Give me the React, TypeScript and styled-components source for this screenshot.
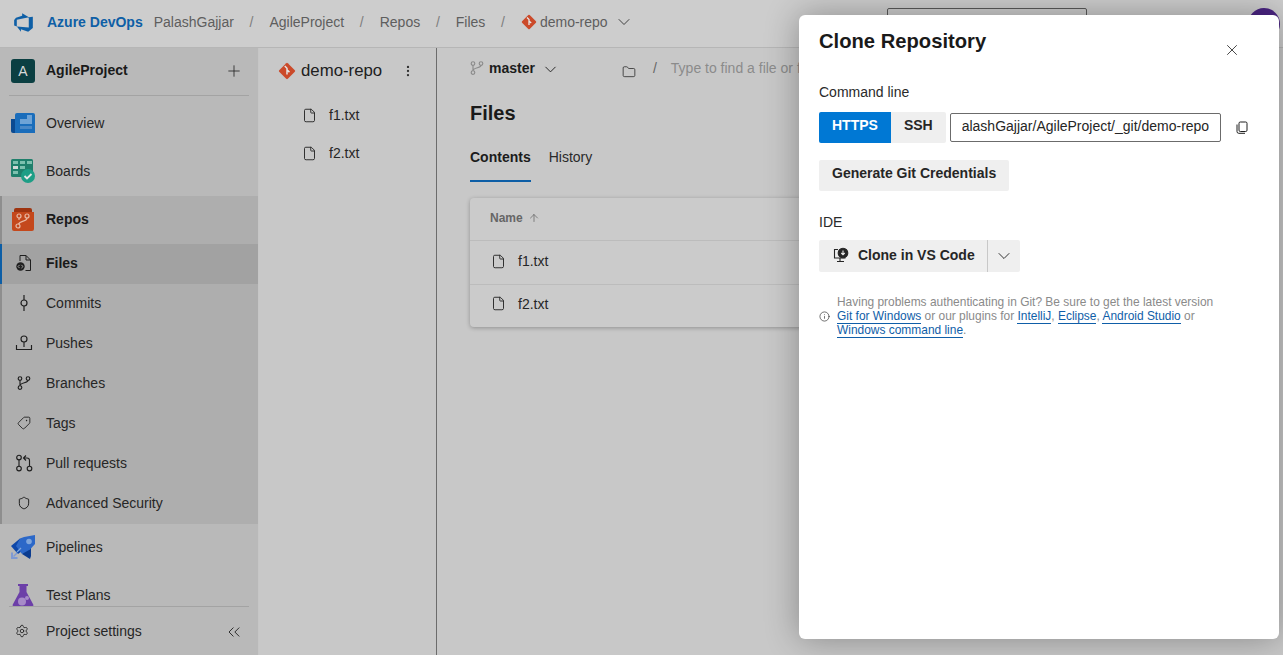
import React from "react";
import styled, { createGlobalStyle } from "styled-components";
import { ChevronDown, Plus, X, ChevronsLeft, Settings, Info, Folder, EllipsisVertical, File, ArrowUp, Tag, Shield } from "lucide-react";

const GlobalStyle = createGlobalStyle`
  html, body {
    margin: 0;
    height: 100%;
    overflow: hidden;
    background: #c8c8c8;
    font-family: "Liberation Sans", Arial, sans-serif;
    font-size: 14px;
    color: #202020;
  }
  #root { height: 100%; }
  * { box-sizing: border-box; }
`;

const Page = styled.div`
  position: relative;
  height: 655px;
  display: flex;
  flex-direction: column;
  overflow: hidden;
`;

const TopBar = styled.header`
  height: 48px;
  flex: none;
  display: flex;
  align-items: center;
  padding: 0 3px 4px 13px;
  background: #cdcdcd;
  border-bottom: 1px solid #b6b6b6;
`;

const Logo = styled.svg`
  width: 21px;
  height: 21px;
  margin: 2px 13px 0 0;
  fill: #0e5fa6;
`;

const Brand = styled.span`
  font-weight: 700;
  color: #0e5fa6;
  margin-right: 11px;
`;

const Crumb = styled.span`
  color: #5e5e5e;
  display: inline-flex;
  align-items: center;
`;

const CrumbName = styled.span`
  margin: 0 6px 0 3px;
`;

const Slash = styled.span`
  color: #7e7e7e;
  margin: 0 16px 0 15.700px;
`;

const SearchBox = styled.div`
  margin: 4px 0 0 auto;
  width: 200px;
  height: 32px;
  border: 1px solid #5a5a5a;
  border-radius: 2px;
`;

const Avatar = styled.div`
  width: 32px;
  height: 32px;
  margin: 4px 0 0 161px;
  border-radius: 50%;
  background: #4a2482;
`;

const Body = styled.div`
  flex: 1;
  display: flex;
  min-height: 0;
`;

const Sidebar = styled.nav`
  width: 259px;
  flex: none;
  display: flex;
  flex-direction: column;
  background: #b9b9b9;
  border-right: 1px solid #c6c6c6;
`;

const ProjectRow = styled.div`
  height: 48px;
  flex: none;
  margin: 0 9px;
  padding: 0 6px 3px 2px;
  display: flex;
  align-items: center;
  gap: 11px;
  border-bottom: 1px solid #a3a3a3;
  font-weight: 700;
  color: #1a1a1a;
`;

const ProjectBadge = styled.span`
  width: 24px;
  height: 24px;
  margin-top: 2px;
  border-radius: 3px;
  background: #0b3f42;
  color: #d8d8d8;
  font-weight: 400;
  display: flex;
  align-items: center;
  justify-content: center;
`;

const PushRight = styled.span`
  margin: 2px 0 0 auto;
  display: flex;
  color: #222;
`;

const NavList = styled.div`
  flex: 1;
  min-height: 0;
  overflow: hidden;
  padding-top: 4px;
`;

const SectionRow = styled.div<{ $bold?: boolean; $inset?: boolean }>`
  height: 48px;
  padding-left: ${(p) => (p.$inset ? 9 : 11)}px;
  padding-bottom: 2px;
  display: flex;
  align-items: center;
  gap: 11px;
  font-weight: ${(p) => (p.$bold ? 700 : 400)};
  color: ${(p) => (p.$bold ? "#1a1a1a" : "#262626")};
`;

const RepoGroup = styled.div`
  background: #aeaeae;
  border-left: 2px solid #8e8e8e;
`;

const SubRow = styled.div<{ $active?: boolean }>`
  height: 40px;
  margin-left: -2px;
  padding-left: 11px;
  padding-bottom: 2px;
  display: flex;
  align-items: center;
  gap: 11px;
  border-left: 2px solid ${(p) => (p.$active ? "#0d5ea6" : "#8e8e8e")};
  background: ${(p) => (p.$active ? "#a2a2a2" : "transparent")};
  font-weight: ${(p) => (p.$active ? 700 : 400)};
  color: ${(p) => (p.$active ? "#1a1a1a" : "#262626")};
`;

const ColorIcon = styled.svg`
  width: 24px;
  height: 24px;
  flex: none;
`;

const SubIcon = styled.span`
  width: 22px;
  height: 24px;
  flex: none;
  display: flex;
  align-items: center;
  justify-content: center;
  color: #1f1f1f;
`;

const SettingsRow = styled.div`
  height: 49px;
  flex: none;
  margin: 0 9px;
  padding: 0 5px 0 6px;
  display: flex;
  align-items: center;
  gap: 17px;
  border-top: 1px solid #a3a3a3;
  color: #262626;
`;

const RepoTree = styled.aside`
  width: 178px;
  flex: none;
  padding: 11px 0 0 19px;
  border-right: 1px solid #6c6c6c;
`;

const RepoHead = styled.div`
  display: flex;
  align-items: center;
  height: 24px;
  font-size: 16.800px;
  color: #202020;
  gap: 5px;
`;

const Kebab = styled.span`
  display: flex;
  margin-left: 14px;
  color: #333;
`;

const TreeList = styled.div`
  margin-top: 13px;
`;

const TreeFile = styled.div`
  height: 38px;
  padding-left: 24px;
  display: flex;
  align-items: center;
  gap: 12px;
  color: #262626;
`;

const Main = styled.main`
  flex: 1;
  padding: 8px 23px 0 33px;
  min-width: 0;
`;

const PathBar = styled.div`
  height: 24px;
  display: flex;
  align-items: center;
  color: #8b8b8b;
`;

const BranchName = styled.span`
  margin-left: 5px;
  font-weight: 700;
  color: #1c1c1c;
`;

const BranchChevron = styled.span`
  display: flex;
  margin: 2px 62px 0 6px;
  color: #222;
`;

const PathSlash = styled.span`
  margin: 0 14px 0 17px;
  color: #666;
`;

const FilesTitle = styled.h1`
  margin: 19px 0 0;
  font-size: 20px;
  line-height: 28px;
  font-weight: 700;
  color: #1a1a1a;
`;

const Tabs = styled.div`
  margin-top: 16px;
  display: flex;
  gap: 18px;
`;

const Tab = styled.div<{ $active?: boolean }>`
  height: 39px;
  padding-top: 6px;
  font-weight: ${(p) => (p.$active ? 700 : 400)};
  color: ${(p) => (p.$active ? "#1c1c1c" : "#2a2a2a")};
  border-bottom: 2px solid ${(p) => (p.$active ? "#0d5ea6" : "transparent")};
`;

const Card = styled.section`
  margin-top: 16px;
  border-radius: 4px;
  background: #cbcbcb;
  box-shadow: 0 1px 4px rgba(0, 0, 0, 0.28);
`;

const CardHead = styled.div`
  height: 43px;
  padding: 0 20px 3px;
  display: flex;
  align-items: center;
  gap: 5px;
  font-size: 12px;
  font-weight: 700;
  color: #666;
  border-bottom: 1px solid #bcbcbc;
`;

const CardRow = styled.div`
  height: 43px;
  padding: 0 20px 3px 21px;
  display: flex;
  align-items: center;
  gap: 12px;
  color: #262626;
  & + & {
    padding-bottom: 5px;
    border-top: 1px solid #bcbcbc;
  }
`;

const Dialog = styled.div`
  position: absolute;
  top: 15px;
  left: 799px;
  width: 480px;
  height: 624px;
  padding: 13px 20px;
  background: #fff;
  border-radius: 6px;
  box-shadow: 0 0 34px rgba(0, 0, 0, 0.32);
`;

const DialogHead = styled.div`
  display: flex;
  justify-content: space-between;
`;

const DialogTitle = styled.h2`
  margin: 0;
  font-size: 20.200px;
  line-height: 26px;
  font-weight: 700;
  color: #1a1a1a;
`;

const CloseBtn = styled.span`
  display: flex;
  margin: 13px 0 0;
  padding-right: 18px;
  color: #222;
`;

const Label = styled.div<{ $gap: number }>`
  margin-top: ${(p) => p.$gap}px;
  font-size: 14px;
  line-height: 18px;
  color: #2a2a2a;
`;

const CommandRow = styled.div`
  margin-top: 11px;
  display: flex;
  align-items: center;
`;

const Segment = styled.button<{ $on?: boolean }>`
  height: 31px;
  border: 0;
  padding: 0 13px 5px;
  font: 700 14px "Liberation Sans", Arial, sans-serif;
  color: ${(p) => (p.$on ? "#fff" : "#262626")};
  background: ${(p) => (p.$on ? "#0078d4" : "#efefef")};
  border-radius: ${(p) => (p.$on ? "2px 0 0 2px" : "0 2px 2px 0")};
`;

const UrlInput = styled.input`
  width: 271px;
  height: 29px;
  margin-left: 4px;
  padding: 0 11px 4px;
  border: 1px solid #6b6b6b;
  border-radius: 2px;
  font: 14px "Liberation Sans", Arial, sans-serif;
  color: #262626;
  outline: none;
`;

const CopyBtn = styled.svg`
  width: 12px;
  height: 13px;
  margin-left: 15px;
  fill: none;
  stroke: #1f1f1f;
  stroke-width: 1;
`;

const PlainButton = styled.button`
  display: block;
  margin-top: 17px;
  height: 31px;
  padding: 0 13px 5px;
  border: 0;
  border-radius: 2px;
  background: #efefef;
  color: #262626;
  font: 700 14px "Liberation Sans", Arial, sans-serif;
`;

const SplitButton = styled.div`
  margin-top: 9px;
  width: 201px;
  height: 32px;
  display: flex;
  align-items: center;
  border-radius: 2px;
  background: #efefef;
  font-weight: 700;
  color: #262626;
`;

const SplitMain = styled.div`
  width: 169px;
  height: 100%;
  padding: 0 0 2px 14px;
  display: flex;
  align-items: center;
  gap: 9px;
  border-right: 1px solid #c8c8c8;
`;

const SplitArrow = styled.div`
  flex: 1;
  display: flex;
  justify-content: center;
  color: #222;
`;

const Note = styled.div`
  margin-top: 23px;
  display: flex;
  align-items: center;
  gap: 7px;
  color: #333;
`;

const NoteText = styled.p`
  margin: 0;
  width: 410px;
  font-size: 11.950px;
  line-height: 14px;
  color: #8a8a8a;
`;

const NoteLink = styled.a`
  color: #0f5ea8;
  text-decoration: none;
  box-shadow: 0 1px 0 #0f5ea8;
`;

const GitDiamond = ({ size }: { size: number }) => (
  <svg width={size} height={size} viewBox="0 0 16 16" style={{ flex: "none" }}>
    <rect x="2.600" y="2.600" width="10.800" height="10.800" rx="1" transform="rotate(45 8 8)" fill="#cb4a2a" />
    <path d="M6 3.500 8 5.500V11M8 7l2.200 2" stroke="#e6e6e6" strokeWidth="1.300" fill="none" />
  </svg>
);

const BranchIcon = () => (
  <svg width="14" height="14" viewBox="0 0 14 14" fill="none" stroke="currentColor" strokeWidth="1.150">
    <circle cx="3" cy="2.500" r="1.800" />
    <circle cx="11" cy="2.500" r="1.800" />
    <circle cx="3" cy="11.500" r="1.800" />
    <path d="M3 4.300v5.400M11 4.300C11 7.500 3.500 6 3 9.700" />
  </svg>
);

const CommitIcon = () => (
  <svg width="16" height="16" viewBox="0 0 16 16" fill="none" stroke="currentColor" strokeWidth="1.200">
    <circle cx="8" cy="8" r="3" />
    <path d="M8 0v5M8 11v5" />
  </svg>
);

const PullRequestIcon = () => (
  <svg width="18" height="18" viewBox="0 0 18 18" fill="none" stroke="currentColor" strokeWidth="1.150">
    <circle cx="4" cy="3.500" r="2.300" />
    <circle cx="4" cy="14.500" r="2.300" />
    <circle cx="14.500" cy="14.500" r="2.300" />
    <path d="M4 5.800v6.400M14.500 12.200V6.500a2.500 2.500 0 0 0-2.500-2.500H8.500M11 1.500 8.500 4 11 6.500" />
  </svg>
);

const FilesIcon = () => (
  <svg width="18" height="18" viewBox="0 0 18 18" fill="none">
    <path d="M5 7V1.500h6l4.500 4.500v10.500h-5M11 1.500V6h4.500" stroke="#1f1f1f" strokeWidth="1" />
    <circle cx="5.500" cy="12.500" r="4.200" fill="#1f1f1f" />
    <path d="M4.600 10.900 3 12.500l1.600 1.600M6.400 10.900 8 12.500l-1.600 1.600" stroke="#b0b0b0" strokeWidth="0.900" fill="none" />
  </svg>
);

const PushesIcon = () => (
  <svg width="18" height="18" viewBox="0 0 18 18" fill="none" stroke="currentColor" strokeWidth="1.150">
    <circle cx="9" cy="5" r="3" />
    <path d="M9 8v5M1.500 11v4.500h15V11" />
  </svg>
);

const OverviewIcon = () => (
  <ColorIcon viewBox="0 0 24 24">
    <path d="M0 8h10v14H2a2 2 0 0 1-2-2z" fill="#0b4a91" />
    <path d="M4 4a2 2 0 0 1 2-2h16a2 2 0 0 1 2 2v18H4z" fill="#1a6dbb" />
    <rect x="16" y="4" width="5" height="9" fill="#6ea3d6" />
    <rect x="9" y="8" width="12" height="5" fill="#6ea3d6" />
    <rect x="9" y="15" width="12" height="3" fill="#4a88c6" />
  </ColorIcon>
);

const BoardsIcon = () => (
  <ColorIcon viewBox="0 0 24 24">
    <rect x="0" y="0" width="22" height="18" rx="1.500" fill="#1f7f6b" />
    <rect x="2" y="2" width="5" height="3" fill="#7cc0ae" />
    <rect x="9" y="2" width="5" height="3" fill="#7cc0ae" />
    <rect x="16" y="2" width="5" height="3" fill="#7cc0ae" />
    <rect x="2" y="7" width="5" height="3" fill="#d0d8d6" />
    <rect x="2" y="12" width="5" height="3" fill="#7cc0ae" />
    <rect x="9" y="7" width="5" height="3" fill="#7cc0ae" />
    <circle cx="17" cy="17" r="7" fill="#1e9e86" />
    <path d="M13.500 17l2.500 2.500 4.500-4.500" stroke="#e8e8e8" strokeWidth="1.800" fill="none" />
  </ColorIcon>
);

const ReposIcon = () => (
  <ColorIcon viewBox="0 0 24 24">
    <path d="M3 3a2 2 0 0 1 2-2h14a2 2 0 0 1 2 2v3H3z" fill="#9e3410" />
    <path d="M1 5h22v17a2 2 0 0 1-2 2H3a2 2 0 0 1-2-2z" fill="#c4481c" />
    <g fill="none" stroke="#e8b9a4" strokeWidth="1.200">
      <circle cx="8" cy="9" r="2" />
      <circle cx="16" cy="9" r="2" />
      <circle cx="7" cy="19" r="2" />
      <path d="M16 11c0 4-7 2-8.500 6.200M8 11v2" />
    </g>
  </ColorIcon>
);

const PipelinesIcon = () => (
  <ColorIcon viewBox="0 0 24 24">
    <path d="M0 11 9 3.500 15 13 7 19z" fill="#0e47a8" />
    <path d="M15 13l5-1v9l-1 3-8-5z" fill="#0b3c8f" />
    <path d="M9 3.500 13 2l11-2v9l-5 5.500L11 19 5 11z" fill="#2c68c8" />
    <circle cx="18" cy="6.500" r="2.800" fill="#7fa6dc" />
    <path d="M6 17l4-4" stroke="#7fa6dc" strokeWidth="1.300" />
    <path d="M0 17.500h2V22h4.500v2H0z" fill="#7f9ad4" />
    <path d="M2.500 21.500 6 18" stroke="#7f9ad4" strokeWidth="1.400" />
  </ColorIcon>
);

const TestPlansIcon = () => (
  <ColorIcon viewBox="0 0 24 24">
    <path d="M7 1h10v2h-1.500v6l7 13a1 1 0 0 1-.9 1H2.400a1 1 0 0 1-.9-1l7-13V3H7z" fill="#6c3fa8" />
    <circle cx="11" cy="18.500" r="4" fill="#a78bc8" />
    <circle cx="16" cy="15" r="2" fill="#a78bc8" />
  </ColorIcon>
);

const CloneIcon = () => (
  <svg width="16" height="16" viewBox="0 0 16 16" fill="none" stroke="#262626" strokeWidth="1.100">
    <path d="M5 2.500H1.500V11h11" />
    <path d="M7 11v3M4 14.500h7" />
    <circle cx="10" cy="6" r="4.800" fill="#262626" />
    <path d="M10 3.500V7.500M8.300 6 10 7.800 11.700 6" stroke="#efefef" />
  </svg>
);

const subItems = [
  { label: "Commits", icon: <CommitIcon /> },
  { label: "Pushes", icon: <PushesIcon /> },
  { label: "Branches", icon: <BranchIcon /> },
  { label: "Tags", icon: <Tag size={14} strokeWidth={1.500} style={{ transform: "rotate(90deg)" }} /> },
  { label: "Pull requests", icon: <PullRequestIcon /> },
  { label: "Advanced Security", icon: <Shield size={14} strokeWidth={1.700} /> },
];

const App = () => {
  return (
    <Page>
      <GlobalStyle />
      <TopBar>
        <Logo viewBox="0 0 18 18">
          <path d="M17 4v9.740l-4 3.280-6.200-2.260V17L3.290 12.410l10.230.8V4.440zm-3.410.490L7.850 1v2.290L2.580 4.840 1 6.870v4.610l2.260 1V6.570z" />
        </Logo>
        <Brand>Azure DevOps</Brand>
        <Crumb>PalashGajjar</Crumb>
        <Slash>/</Slash>
        <Crumb>AgileProject</Crumb>
        <Slash>/</Slash>
        <Crumb>Repos</Crumb>
        <Slash>/</Slash>
        <Crumb>Files</Crumb>
        <Slash>/</Slash>
        <Crumb>
          <GitDiamond size={16} />
          <CrumbName>demo-repo</CrumbName>
          <ChevronDown size={20} strokeWidth={1.100} color="#333" />
        </Crumb>
        <SearchBox />
        <Avatar />
      </TopBar>
      <Body>
        <Sidebar>
          <ProjectRow>
            <ProjectBadge>A</ProjectBadge>
            AgileProject
            <PushRight>
              <Plus size={18} strokeWidth={1.100} />
            </PushRight>
          </ProjectRow>
          <NavList>
            <SectionRow>
              <OverviewIcon />
              Overview
            </SectionRow>
            <SectionRow>
              <BoardsIcon />
              Boards
            </SectionRow>
            <RepoGroup>
              <SectionRow $bold $inset>
                <ReposIcon />
                Repos
              </SectionRow>
              <SubRow $active>
                <SubIcon>
                  <FilesIcon />
                </SubIcon>
                Files
              </SubRow>
              {subItems.map((item) => (
                <SubRow key={item.label}>
                  <SubIcon>{item.icon}</SubIcon>
                  {item.label}
                </SubRow>
              ))}
            </RepoGroup>
            <SectionRow>
              <PipelinesIcon />
              Pipelines
            </SectionRow>
            <SectionRow>
              <TestPlansIcon />
              Test Plans
            </SectionRow>
          </NavList>
          <SettingsRow>
            <Settings size={14} strokeWidth={1.500} />
            Project settings
            <PushRight>
              <ChevronsLeft size={20} strokeWidth={1.100} />
            </PushRight>
          </SettingsRow>
        </Sidebar>
        <RepoTree>
          <RepoHead>
            <GitDiamond size={18} />
            demo-repo
            <Kebab>
              <EllipsisVertical size={14} strokeWidth={2} />
            </Kebab>
          </RepoHead>
          <TreeList>
            <TreeFile>
              <File size={15} strokeWidth={1.500} />
              f1.txt
            </TreeFile>
            <TreeFile>
              <File size={15} strokeWidth={1.500} />
              f2.txt
            </TreeFile>
          </TreeList>
        </RepoTree>
        <Main>
          <PathBar>
            <BranchIcon />
            <BranchName>master</BranchName>
            <BranchChevron>
              <ChevronDown size={19} strokeWidth={1.200} />
            </BranchChevron>
            <Folder size={14} strokeWidth={1.300} color="#222" style={{ marginTop: 7 }} />
            <PathSlash>/</PathSlash>
            Type to find a file or folder...
          </PathBar>
          <FilesTitle>Files</FilesTitle>
          <Tabs>
            <Tab $active>Contents</Tab>
            <Tab>History</Tab>
          </Tabs>
          <Card>
            <CardHead>
              Name
              <ArrowUp size={12} strokeWidth={1.500} />
            </CardHead>
            <CardRow>
              <File size={15} strokeWidth={1.500} />
              f1.txt
            </CardRow>
            <CardRow>
              <File size={15} strokeWidth={1.500} />
              f2.txt
            </CardRow>
          </Card>
        </Main>
      </Body>
      <Dialog>
        <DialogHead>
          <DialogTitle>Clone Repository</DialogTitle>
          <CloseBtn>
            <X size={18} strokeWidth={1.100} />
          </CloseBtn>
        </DialogHead>
        <Label $gap={24}>Command line</Label>
        <CommandRow>
          <Segment $on>HTTPS</Segment>
          <Segment>SSH</Segment>
          <UrlInput readOnly value="alashGajjar/AgileProject/_git/demo-repo" />
          <CopyBtn viewBox="0 0 12 13">
            <rect x="3" y="1" width="8" height="9.500" rx="1.300" />
            <path d="M1 3.500v7A1.800 1.800 0 0 0 2.800 12.300H9" />
          </CopyBtn>
        </CommandRow>
        <PlainButton>Generate Git Credentials</PlainButton>
        <Label $gap={22}>IDE</Label>
        <SplitButton>
          <SplitMain>
            <CloneIcon />
            Clone in VS Code
          </SplitMain>
          <SplitArrow>
            <ChevronDown size={20} strokeWidth={1.100} />
          </SplitArrow>
        </SplitButton>
        <Note>
          <Info size={11} strokeWidth={1.500} />
          <NoteText>
            Having problems authenticating in Git? Be sure to get the latest version
            <br />
            <NoteLink>Git for Windows</NoteLink> or our plugins for <NoteLink>IntelliJ</NoteLink>,{" "}
            <NoteLink>Eclipse</NoteLink>, <NoteLink>Android Studio</NoteLink> or
            <br />
            <NoteLink>Windows command line</NoteLink>.
          </NoteText>
        </Note>
      </Dialog>
    </Page>
  );
};

export default App;
